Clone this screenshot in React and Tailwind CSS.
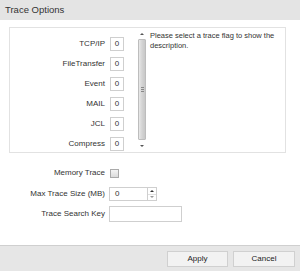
import React from "react";

const flags = ["TCP/IP", "FileTransfer", "Event", "MAIL", "JCL", "Compress"];

function Scrollbar() {
  return (
    <div className="w-[10px] h-full flex flex-col bg-white">
      <div className="h-[11px] flex items-center justify-center">
        <div className="w-0 h-0 border-l-[2px] border-r-[2px] border-b-[2px] border-l-transparent border-r-transparent border-b-[#555]" />
      </div>
      <div className="flex-1 mx-[1px] bg-gradient-to-r from-[#e8e8e8] via-[#d4d4d4] to-[#c8c8c8] border border-[#bdbdbd] rounded-[1px] flex items-center justify-center">
        <div className="flex flex-col gap-[1px]">
          <div className="w-[3px] h-[1px] bg-[#888]" />
          <div className="w-[3px] h-[1px] bg-[#888]" />
          <div className="w-[3px] h-[1px] bg-[#888]" />
        </div>
      </div>
      <div className="h-[12px] flex items-center justify-center">
        <div className="w-0 h-0 border-l-[2px] border-r-[2px] border-t-[2px] border-l-transparent border-r-transparent border-t-[#555]" />
      </div>
    </div>
  );
}

export default function App() {
  return (
    <div
      className="w-[300px] h-[271px] bg-white flex flex-col text-[#333]"
      style={{ fontFamily: '"Liberation Sans", Arial, sans-serif' }}
    >
      <div className="h-[20px] bg-[#e4e4e4] flex items-center pl-[5px] text-[9.5px] text-[#333] shrink-0">
        Trace Options
      </div>

      <div className="flex-1 flex flex-col">
        <div className="mt-[7px] ml-[9px] mr-[14px] h-[126px] border border-[#e2e2e2] flex overflow-hidden">
          <div className="w-[127px] h-full overflow-hidden">
            <div className="flex flex-col gap-[6px] pt-[9px]">
              {flags.map((f) => (
                <div key={f} className="flex items-center h-[14px]">
                  <div className="w-[95px] text-right text-[8px] leading-none">{f}</div>
                  <div className="ml-[5px] w-[14px] h-[14px] border border-[#cfcfcf] flex items-center justify-center text-[8px] leading-none">
                    0
                  </div>
                </div>
              ))}
            </div>
          </div>
          <Scrollbar />
          <div className="flex-1 pl-[3px] pt-[3px] text-[7.5px] leading-[10px] text-[#333]">
            Please select a trace flag to show the description.
          </div>
        </div>

        <div className="mt-[15px] flex flex-col">
          <div className="flex items-center h-[10px]">
            <div className="w-[105px] text-right text-[8px] leading-none">Memory Trace</div>
            <div className="ml-[5px] w-[9px] h-[9px] border border-[#aaa] bg-gradient-to-b from-[#f4f4f4] to-[#dcdcdc]" />
          </div>
          <div className="flex items-center h-[14px] mt-[9px]">
            <div className="w-[105px] text-right text-[8px] leading-none">Max Trace Size (MB)</div>
            <div className="ml-[4px] flex h-[14px]">
              <div className="w-[39px] h-full border border-[#cfcfcf] flex items-center pl-[5px] text-[8px] leading-none">0</div>
              <div className="w-[9px] h-full border border-l-0 border-[#cfcfcf] flex flex-col">
                <div className="flex-1 flex items-center justify-center border-b border-[#e0e0e0]">
                  <div className="w-0 h-0 border-l-[2px] border-r-[2px] border-b-[2px] border-l-transparent border-r-transparent border-b-[#333]" />
                </div>
                <div className="flex-1 flex items-center justify-center">
                  <div className="w-0 h-0 border-l-[2px] border-r-[2px] border-t-[2px] border-l-transparent border-r-transparent border-t-[#999]" />
                </div>
              </div>
            </div>
          </div>
          <div className="flex items-center h-[16px] mt-[5px]">
            <div className="w-[105px] text-right text-[8px] leading-none">Trace Search Key</div>
            <div className="ml-[4px] w-[73px] h-[16px] border border-[#cfcfcf]" />
          </div>
        </div>
      </div>

      <div className="h-[26px] shrink-0 bg-[#e6e6e6] border-t border-[#cfcfcf] flex items-center justify-end gap-[5px] pr-[5px]">
        <div className="w-[61px] h-[16px] bg-[#f2f2f2] border border-[#d0d0d0] flex items-center justify-center text-[8px] text-[#222]">
          Apply
        </div>
        <div className="w-[62px] h-[16px] bg-[#f2f2f2] border border-[#d0d0d0] flex items-center justify-center text-[8px] text-[#222]">
          Cancel
        </div>
      </div>
    </div>
  );
}
